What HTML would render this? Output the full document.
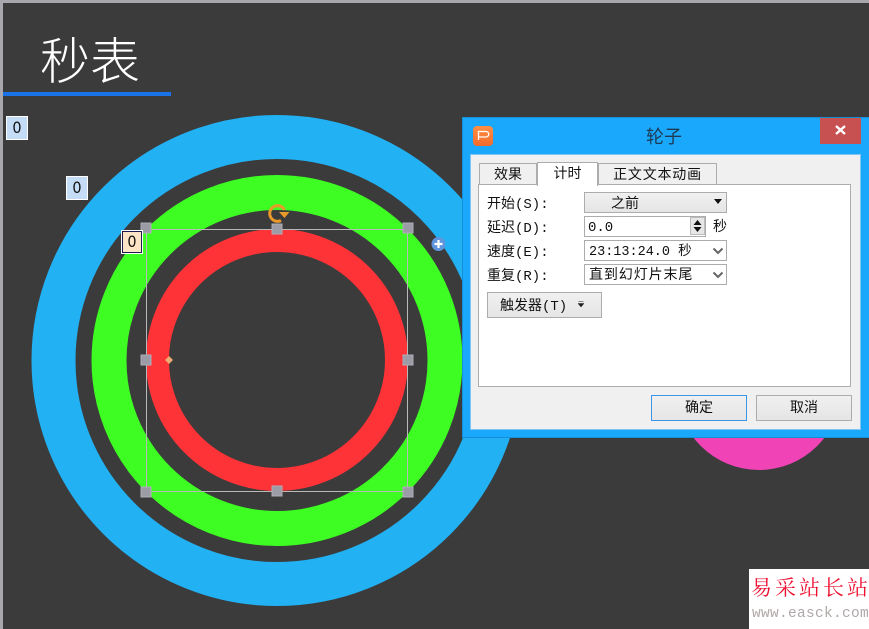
<!DOCTYPE html>
<html><head><meta charset="utf-8"><style>
html,body{margin:0;padding:0}
body{width:869px;height:629px;overflow:hidden;background:#3b3b3b;position:relative;font-family:"Liberation Sans","WenQuanYi Zen Hei","Noto Sans CJK SC",sans-serif}
.a{position:absolute;box-sizing:border-box}
.t{position:absolute;font-family:"Liberation Mono","WenQuanYi Zen Hei","Noto Sans CJK SC",monospace;font-size:14px;line-height:20px;color:#111;white-space:pre}
.btn{position:absolute;box-sizing:border-box;border:1px solid #acacac;background:linear-gradient(#f0f0f0,#e5e5e5)}
.field{position:absolute;box-sizing:border-box;border:1px solid #acacac;background:#fff}
.tab{position:absolute;box-sizing:border-box;border:1px solid #acacac;background:#f0f0f0;text-align:center;font-family:"WenQuanYi Zen Hei","Noto Sans CJK SC",sans-serif;font-size:14px;line-height:20px;color:#111}
.num{position:absolute;box-sizing:border-box;text-align:center;font-size:16px;color:#111;width:22px;height:24px;line-height:22px;border:1px solid #fff;background:#c5dcf7;font-family:"DejaVu Sans Condensed","Liberation Sans",sans-serif}
</style></head><body>
<div class="a" style="left:0;top:0;width:869px;height:3px;background:#a7a7ad"></div>
<div class="a" style="left:0;top:0;width:3px;height:629px;background:#a7a7ad"></div>
<svg class="a" style="left:0;top:0" width="869" height="629" viewBox="0 0 869 629">
<circle cx="759" cy="387.5" r="82.5" fill="#f043b6"/>
<circle cx="277" cy="360.5" r="223.5" fill="none" stroke="#22b1f3" stroke-width="44"/>
<circle cx="277" cy="360.5" r="168" fill="none" stroke="#3dfd22" stroke-width="35"/>
<circle cx="277" cy="360" r="119.5" fill="none" stroke="#fd3337" stroke-width="23"/>
<rect x="146.500" y="229.500" width="261" height="262" fill="none" stroke="#b9b9b9" stroke-width="1"/>
<g fill="#9b9ca6" stroke="#aeaeb5" stroke-width="1">
<rect x="141" y="223" width="10" height="10"/><rect x="272" y="224" width="10" height="10"/><rect x="403" y="223" width="10" height="10"/>
<rect x="141" y="355" width="10" height="10"/><rect x="403" y="355" width="10" height="10"/>
<rect x="141" y="487" width="10" height="10"/><rect x="272" y="486" width="10" height="10"/><rect x="403" y="487" width="10" height="10"/>
</g>
<path d="M169 356l4 4-4 4-4-4z" fill="#eeaa70"/>
<path d="M284.500 210A7.800 7.800 0 1 0 281 220.500" fill="none" stroke="#e99a2a" stroke-width="3"/>
<path d="M279 212h10.500l-5 6z" fill="#e99a2a"/>
<circle cx="438.500" cy="244" r="7" fill="#5f95dc"/>
<path d="M438.500 240v8M434.500 244h8" stroke="#fff" stroke-width="2.200"/>
</svg>
<div class="a" style="left:3px;top:92px;width:168px;height:4px;background:#1a73e8"></div>
<div class="a" style="left:40px;top:23px;font-family:'Noto Sans CJK SC','WenQuanYi Zen Hei',sans-serif;font-weight:300;font-size:50px;line-height:70px;color:#fff">秒表</div>
<div class="num" style="left:6px;top:116px">0</div>
<div class="num" style="left:66px;top:176px">0</div>
<div class="num" style="left:121px;top:230px;background:#fde4c4;outline:1px solid #1a1a50;outline-offset:-2px">0</div>

<div class="a" style="left:462px;top:117px;width:407px;height:321px;background:#1aa8fc;border:1px solid #148fd8;border-right:0"></div>
<div class="a" style="left:820px;top:118px;width:41px;height:26px;background:#c75050"></div>
<svg class="a" style="left:834px;top:124px" width="14" height="14"><path d="M2 2l9 8M11 2l-9 8" stroke="#fff" stroke-width="2.400"/></svg>
<div class="a" style="left:473px;top:126px;width:20px;height:20px;border-radius:4px;background:linear-gradient(#ff8f45,#f26a2a)"></div>
<svg class="a" style="left:473px;top:126px" width="20" height="20"><path d="M5.500 14V5.500h7.500a2.500 2.500 0 0 1 0 5.500H5.500" fill="none" stroke="#fff" stroke-width="1.300"/></svg>
<div class="a" style="left:646px;top:124px;font-family:'WenQuanYi Zen Hei','Noto Sans CJK SC',sans-serif;font-size:18px;line-height:24px;color:#1d3a52">轮子</div>

<div class="a" style="left:470px;top:154px;width:391px;height:276px;background:#f0f0f0;border:1px solid #7fc6f5"></div>
<div class="tab" style="left:479px;top:163px;width:58px;height:22px">效果</div>
<div class="tab" style="left:598px;top:163px;width:119px;height:22px;letter-spacing:.8px">正文文本动画</div>
<div class="a" style="left:478px;top:184px;width:373px;height:203px;background:#fff;border:1px solid #acacac"></div>
<div class="tab" style="left:537px;top:162px;width:61px;height:24px;background:#fff;border-bottom:0">计时</div>

<div class="t" style="left:487px;top:195px">开始(S):</div>
<div class="t" style="left:487px;top:219px">延迟(D):</div>
<div class="t" style="left:487px;top:243px">速度(E):</div>
<div class="t" style="left:487px;top:267px">重复(R):</div>

<div class="btn" style="left:584px;top:192px;width:143px;height:21px"></div>
<div class="t" style="left:611px;top:195px">之前</div>
<svg class="a" style="left:714px;top:199px" width="8" height="6"><path d="M0 0h8l-4 5z" fill="#111"/></svg>

<div class="field" style="left:584px;top:216px;width:122px;height:21px"></div>
<div class="t" style="left:588px;top:218px">0.0</div>
<div class="a" style="left:690px;top:217px;width:15px;height:18px;background:#e6e6e6;border:1px solid #bdbdbd"></div>
<svg class="a" style="left:690px;top:217px" width="15" height="18"><path d="M3.500 8l4-5 4 5zM3.500 10l4 5 4-5z" fill="#111"/></svg>
<div class="t" style="left:713px;top:218px">秒</div>

<div class="field" style="left:584px;top:240px;width:143px;height:21px"></div>
<div class="t" style="left:589px;top:243px;font-size:13.500px">23:13:24.0 秒</div>
<svg class="a" style="left:712px;top:247px" width="12" height="9"><path d="M1.500 1.500l4.500 4.500 4.500-4.500" fill="none" stroke="#666" stroke-width="2"/></svg>

<div class="field" style="left:584px;top:264px;width:143px;height:21px"></div>
<div class="t" style="left:589px;top:266px;letter-spacing:.9px">直到幻灯片末尾</div>
<svg class="a" style="left:712px;top:271px" width="12" height="9"><path d="M1.500 1.500l4.500 4.500 4.500-4.500" fill="none" stroke="#666" stroke-width="2"/></svg>

<div class="btn" style="left:487px;top:292px;width:115px;height:26px"></div>
<div class="t" style="left:500px;top:297px">触发器(T)</div>
<svg class="a" style="left:578px;top:301px" width="6" height="7"><path d="M.5 .5h5M0 2.500h6l-3 3.500z" fill="#222" stroke="#222" stroke-width=".5"/></svg>

<div class="btn" style="left:651px;top:395px;width:96px;height:26px;border-color:#3c96e8;text-align:center"><span class="t" style="position:relative;top:1px;line-height:24px">确定</span></div>
<div class="btn" style="left:756px;top:395px;width:96px;height:26px;text-align:center"><span class="t" style="position:relative;top:1px;line-height:24px">取消</span></div>

<div class="a" style="left:749px;top:569px;width:120px;height:60px;background:#fff"></div>
<div class="a" style="left:751px;top:574px;width:118px;font-family:'Noto Serif CJK SC',serif;font-size:21px;line-height:26px;letter-spacing:3px;color:#ee1030;white-space:nowrap;overflow:hidden">易采站长站</div>
<div class="a" style="left:752px;top:604px;width:117px;font-family:'Liberation Mono',monospace;font-size:14.500px;line-height:20px;letter-spacing:.3px;color:#b0a8a8;white-space:nowrap;overflow:hidden">www.easck.com</div>
</body></html>
